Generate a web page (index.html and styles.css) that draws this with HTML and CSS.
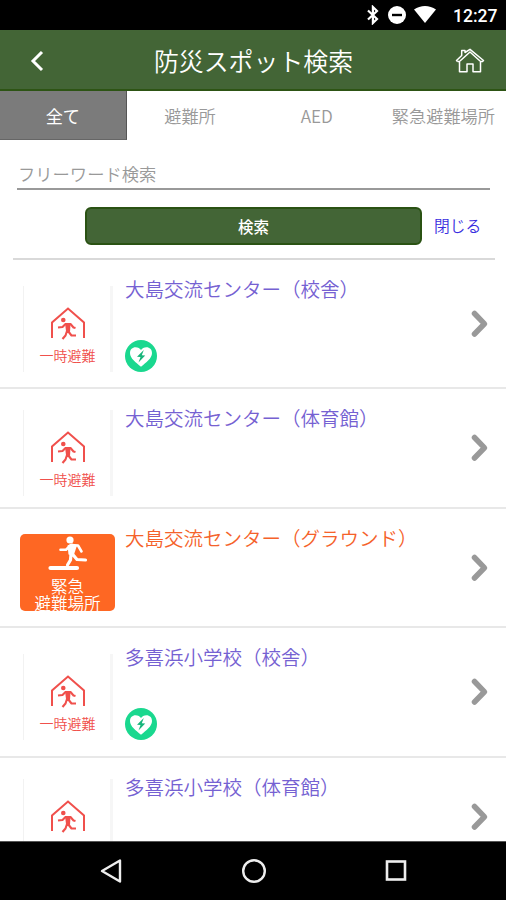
FILE: index.html
```html
<!DOCTYPE html>
<html lang="ja">
<head>
<meta charset="utf-8">
<title>防災スポット検索</title>
<link rel="stylesheet" href="styles.css">
</head>
<body>
<svg class="defs" aria-hidden="true">
  <symbol id="shelter" viewBox="0 0 36 34">
    <path d="M2 32V16.500L18 2.500L34 16.500V32" fill="none" stroke="currentColor" stroke-width="2"/>
    <circle cx="13.300" cy="14" r="2.300" fill="currentColor"/>
    <path d="M8 21.500L12.500 21L15.500 18L20.500 18L23.500 21.500L25.500 22M19 19L18 25L21.500 29.500H26M17 25L15.500 29.500L12.500 33" fill="none" stroke="currentColor" stroke-width="2.100" stroke-linejoin="round"/>
    <path d="M15 17L20.500 17.500L20 26L16 25Z" fill="currentColor"/>
  </symbol>
  <symbol id="chevron" viewBox="0 0 20 30">
    <path d="M4.500 4.500L14.500 14.800L4.500 25" fill="none" stroke="currentColor" stroke-width="5.500" stroke-linecap="round" stroke-linejoin="round"/>
  </symbol>
  <symbol id="aed" viewBox="0 0 32 32">
    <circle cx="16" cy="16" r="16" fill="#1ad88f"/>
    <path d="M16 26.800C11 22.500 5 18.500 5 13C5 9.500 7.500 7.300 10.500 7.300C13 7.300 15 8.500 16 10C17 8.500 19 7.300 21.500 7.300C24.500 7.300 27 9.500 27 13C27 18.500 21 22.500 16 26.800Z" fill="#fff"/>
    <path d="M18.800 10L12 16.800L15.500 17L13.500 22.500L20.200 15.500L16.800 15.200Z" fill="#18b57b"/>
  </symbol>
</svg>
<header class="status">
  <svg class="status-icons" viewBox="0 0 70 20">
    <path d="M2 5.500L11 14L6.900 18V2L11 6L2 14.500" fill="none" stroke="#fff" stroke-width="2.200"/>
    <circle cx="31" cy="10" r="9" fill="#fff"/>
    <path d="M26 10H36" stroke="#000" stroke-width="2.400"/>
    <path d="M48 4.500C54.500 -.3 63.500 -.3 70 4.500L59 18Z" fill="#fff"/>
  </svg>
  <span class="clock">12:27</span>
</header>
<div class="bar">
  <svg class="back" viewBox="0 0 16 22"><path d="M13 2L4 11L13 20" fill="none" stroke="#fff" stroke-width="3"/></svg>
  <h1>防災スポット検索</h1>
  <svg class="home" viewBox="0 0 30 26"><path d="M2.500 13.500L1.500 12.500L6.700 7.500V2.500H10V4.500L15 1.300L28.500 12.500L27.500 13.500H25.500V23.800H18V16H12V23.800H4.500V13.500H2.500M5 13L15 4L25 13" fill="none" stroke="#fff" stroke-width="1.500" stroke-linejoin="round"/></svg>
</div>
<nav class="tabs">
  <span class="tab active">全て</span>
  <span class="tab">避難所</span>
  <span class="tab">AED</span>
  <span class="tab">緊急避難場所</span>
</nav>
<section class="search">
  <div class="field">フリーワード検索</div>
  <div class="actions">
    <button class="submit">検索</button>
    <a class="close">閉じる</a>
  </div>
</section>
<main class="list">
  <article class="row tall">
    <div class="thumb"><svg class="house"><use href="#shelter"/></svg><span>一時避難</span></div>
    <div class="info"><h2>大島交流センター（校舎）</h2><svg class="aed"><use href="#aed"/></svg></div>
    <svg class="chevron"><use href="#chevron"/></svg>
  </article>
  <article class="row">
    <div class="thumb"><svg class="house"><use href="#shelter"/></svg><span>一時避難</span></div>
    <div class="info"><h2>大島交流センター（体育館）</h2></div>
    <svg class="chevron"><use href="#chevron"/></svg>
  </article>
  <article class="row urgent">
    <div class="sign">
      <svg class="runner" viewBox="0 0 40 36">
        <circle cx="22" cy="5" r="3.600" fill="#fff"/>
        <path d="M12.500 14.700H18L23 10L30 10.500L33.500 16.500" fill="none" stroke="#fff" stroke-width="2.600" stroke-linecap="round" stroke-linejoin="round"/>
        <path d="M19.500 10.500L24 8.500L29 10.500L25.500 21L20.500 19.500Z" fill="#fff"/>
        <path d="M23.500 18L29 24.500L37.500 25M23 19L22.500 25L19.500 30" fill="none" stroke="#fff" stroke-width="3.200" stroke-linecap="round" stroke-linejoin="round"/>
        <path d="M2.500 33H29" stroke="#fff" stroke-width="4.200" stroke-linecap="round"/>
      </svg>
      <span>緊急</span><span>避難場所</span>
    </div>
    <div class="info"><h2>大島交流センター（グラウンド）</h2></div>
    <svg class="chevron"><use href="#chevron"/></svg>
  </article>
  <article class="row tall">
    <div class="thumb"><svg class="house"><use href="#shelter"/></svg><span>一時避難</span></div>
    <div class="info"><h2>多喜浜小学校（校舎）</h2><svg class="aed"><use href="#aed"/></svg></div>
    <svg class="chevron"><use href="#chevron"/></svg>
  </article>
  <article class="row">
    <div class="thumb"><svg class="house"><use href="#shelter"/></svg></div>
    <div class="info"><h2>多喜浜小学校（体育館）</h2></div>
    <svg class="chevron"><use href="#chevron"/></svg>
  </article>
</main>
<footer class="nav">
  <svg viewBox="0 0 24 26"><path d="M21 2.500V23.500L3 13Z" fill="none" stroke="#eee" stroke-width="2.400" stroke-linejoin="round"/></svg>
  <svg viewBox="0 0 24 26"><circle cx="12" cy="13" r="10.800" fill="none" stroke="#eee" stroke-width="2.400"/></svg>
  <svg viewBox="0 0 24 26"><rect x="2" y="3.500" width="18" height="18" fill="none" stroke="#eee" stroke-width="2.600"/></svg>
</footer>
</body>
</html>
```
FILE: styles.css
```css
* { box-sizing: border-box; }
body {
  margin: 0;
  height: 900px;
  overflow: hidden;
  display: flex;
  flex-direction: column;
  background: #fff;
  font-family: "Noto Sans CJK JP", sans-serif;
}
h1, h2 { margin: 0; font-weight: 350; white-space: nowrap; }
svg { display: block; flex: none; }
.defs { display: none; }

.status {
  flex: none;
  height: 30px;
  padding-right: 9px;
  display: flex;
  align-items: center;
  justify-content: flex-end;
  gap: 17px;
  background: #000;
  color: #fff;
}
.status-icons { width: 70px; height: 20px; }
.clock { width: 44px; font: 500 17.5px/30px Roboto, sans-serif; padding-top: 2px; }

.bar {
  flex: none;
  height: 60.5px;
  padding: 0 21px 0 29px;
  display: grid;
  grid-template-columns: 30px 1fr 30px;
  align-items: center;
  background: #436536;
  border-bottom: 2px solid #2d5414;
  color: #fff;
}
.back { width: 16px; height: 22px; margin-top: 3px; }
.bar h1 { font-size: 24.9px; line-height: 36px; text-align: center; margin: 2px 0 0 -7px; }
.home { width: 30px; height: 26px; margin-top: 4px; }

.tabs {
  flex: none;
  height: 49.5px;
  display: grid;
  grid-template-columns: repeat(4, 126.7px);
}
.tab {
  height: 49px;
  color: #999;
  font-size: 17.2px;
  font-weight: 350;
  line-height: 50px;
  text-align: center;
  white-space: nowrap;
}
.tab.active { background: #7b7b7b; color: #fff; font-weight: 400; border-right: 1px solid #555; border-bottom: 1px solid #666; }

.search {
  flex: none;
  height: 120px;
  margin: 0 11px 0 13px;
  padding-top: 18px;
  border-bottom: 2px solid #d9d9d9;
}
.field {
  height: 32px;
  margin: 0 5px 0 4px;
  border-bottom: 2px solid #999;
  color: #999;
  font-size: 17.3px;
  font-weight: 350;
  line-height: 32px;
  padding-left: 1px;
}
.actions { display: flex; align-items: center; gap: 12px; margin: 17px 0 0 72px; }
.submit {
  width: 337px;
  height: 38px;
  padding: 0;
  border: 2px solid #2a5213;
  border-radius: 6px;
  background: #436536;
  color: #fff;
  font: 500 15.5px/34px "Noto Sans CJK JP", sans-serif;
}
.close { color: #3a2ee0; font-size: 15.8px; font-weight: 350; line-height: 24px; white-space: nowrap; }

.list { flex: 1; min-height: 0; overflow: hidden; }
.row {
  height: 119.7px;
  padding: 0 16px 0 20px;
  display: flex;
  align-items: center;
  border-bottom: 2px solid #e8e8e8;
  color: #7561d2;
}
.row.tall { height: 129.3px; }
.row:first-child { height: 129px; }
.row.urgent { color: #f5622a; }
.thumb {
  width: 90px;
  height: 86px;
  margin: 10px 12px 0 3px;
  padding: 20px 0 0 1px;
  display: flex;
  flex-direction: column;
  align-items: center;
  border-left: 1px solid #f2f2f2;
  border-right: 3px solid #f6f6f6;
  color: #f0504c;
}
.house { width: 36px; height: 34px; }
.thumb span { margin-top: 5px; font-size: 14px; line-height: 20px; font-weight: 350; white-space: nowrap; }
.sign {
  width: 95px;
  height: 77px;
  margin: 10px 10px 0 0;
  display: flex;
  flex-direction: column;
  align-items: center;
  overflow: hidden;
  border-radius: 5px;
  background: #fe6723;
  color: #fff;
  font-size: 16.5px;
  line-height: 17px;
}
.runner { width: 40px; height: 36px; margin: 1px 0 7px; }
.sign span { flex: none; font-weight: 350; white-space: nowrap; }
.info { flex: 1; align-self: stretch; padding-top: 14px; }
.info h2 { font-size: 19.5px; line-height: 29px; }
.aed { width: 32px; height: 32px; margin: 37px 0 0 0; }
.chevron { width: 20px; height: 30px; color: #999; }

.nav {
  flex: none;
  height: 59px;
  padding: 0 97px 0 99px;
  display: flex;
  align-items: center;
  justify-content: space-between;
  background: #000;
  border-top: 1px solid #555;
}
.nav svg { width: 24px; height: 26px; }
```
